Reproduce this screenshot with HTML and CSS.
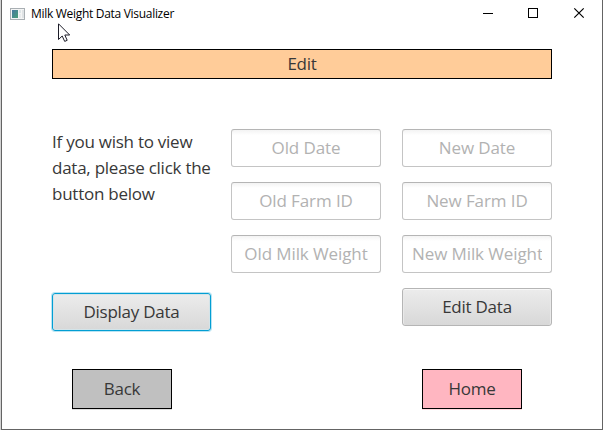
FILE: index.html
```
<!DOCTYPE html>
<html lang="en">
<head>
<meta charset="utf-8">
<title>Milk Weight Data Visualizer</title>
<link rel="stylesheet" href="styles.css">
</head>
<body>
<div class="window">
  <header class="titlebar">
    <svg class="app-icon" width="15" height="12" viewBox="0 0 15 12">
      <defs><linearGradient id="g" x1="0" y1="0" x2="1" y2="1"><stop offset="0" stop-color="#4878a0"/><stop offset="1" stop-color="#48a078"/></linearGradient></defs>
      <rect x=".5" y=".5" width="14" height="11" fill="#f4f5f5" stroke="#a9afb3"/>
      <rect x="2" y="2" width="6" height="8" fill="url(#g)"/>
      <rect x="9" y="2" width="2" height="3" fill="#dce4e6"/>
      <rect x="12" y="2" width="2" height="8" fill="#dfe3e5"/>
      <rect x="9" y="6" width="2" height="4" fill="#e8ebed"/>
    </svg>
    <span class="title">Milk Weight Data Visualizer</span>
    <svg class="controls" width="103" height="12" viewBox="0 0 103 12" fill="none" stroke="#000">
      <path d="M0 6.5H10M45.5 1.5H54.5V10.5H45.5Z" shape-rendering="crispEdges"/>
      <path d="M91.3 1.3L100.7 10.7M100.7 1.3L91.3 10.7" stroke-width="1.2"/>
    </svg>
  </header>
  <main class="content">
    <h1 class="heading">Edit</h1>
    <div class="columns">
      <section class="view">
        <p class="hint">If you wish to view<br>data, please click the<br>button below</p>
        <button class="button focused">Display Data</button>
      </section>
      <section class="fields">
        <input class="field" placeholder="Old Date" aria-label="Old Date">
        <input class="field" placeholder="Old Farm ID" aria-label="Old Farm ID">
        <input class="field" placeholder="Old Milk Weight" aria-label="Old Milk Weight">
      </section>
      <section class="fields">
        <input class="field" placeholder="New Date" aria-label="New Date">
        <input class="field" placeholder="New Farm ID" aria-label="New Farm ID">
        <input class="field overflowing" placeholder="New Milk Weight" aria-label="New Milk Weight">
        <button class="button">Edit Data</button>
      </section>
    </div>
    <nav class="nav">
      <button class="nav-button back">Back</button>
      <button class="nav-button home">Home</button>
    </nav>
  </main>
  <svg class="cursor" width="13" height="20" viewBox="0 0 13 20">
    <path d="M.5 .8V16.5L4.2 13L6.7 18.4L9.2 17.3L6.8 12H11.7Z" fill="#fff" stroke="#1c1c28"/>
  </svg>
</div>
</body>
</html>
```
FILE: styles.css
```
* { box-sizing: border-box; }
body {
  margin: 0;
  width: 603px;
  height: 430px;
  overflow: hidden;
  background: #d2d2d2;
  font: 17px/26px "Open Sans", "Noto Sans", sans-serif;
  color: #383838;
}
.window {
  position: relative;
  height: 430px;
  margin-left: 1px;
  background: #fff;
  border: solid #646464;
  border-width: 0 1px 1px;
}
.titlebar {
  display: flex;
  align-items: center;
  height: 27px;
  padding: 0 16px 0 8px;
}
.title {
  margin-left: 6px;
  font-size: 12px;
  line-height: 16px;
  letter-spacing: -0.3px;
  color: #000;
  white-space: nowrap;
}
.controls { margin-left: auto; position: relative; top: -0.5px; }
.content { width: 500px; margin: 22px 0 0 50px; }
.heading {
  display: flex;
  justify-content: center;
  margin: 0;
  height: 30px;
  border: 1px solid #000;
  background: #ffcc99;
  font: inherit;
  line-height: 28px;
}
.columns {
  display: grid;
  grid-template-columns: 159px 150px 150px;
  justify-content: space-between;
  margin-top: 50px;
  height: 202px;
}
.columns > :nth-child(2) { margin: 0 0.5px 0 -0.5px; }
.view {
  display: flex;
  flex-direction: column;
  justify-content: space-between;
}
.hint { margin: 0; white-space: nowrap; }
.fields { display: flex; flex-direction: column; gap: 15px; }
.field, .button {
  display: block;
  width: 100%;
  height: 38px;
  margin: 0;
  border: 1px solid #c4c4c4;
  border-top-color: #b5b5b5;
  border-radius: 3px;
  font: inherit;
  color: #383838;
}
.field {
  padding: 0 9px 1px;
  text-align: center;
  background: linear-gradient(#f3f3f3, #fff 5px);
}
.field::placeholder { color: #b2b2b2; opacity: 1; }
.overflowing { text-align: left; }
.button {
  padding: 0;
  background: linear-gradient(#ececec, #d8d8d8);
  border-color: #b5b5b5;
  box-shadow: inset 0 1px #f8f8f8, inset 1px 0 #e9e9e9, inset -1px 0 #e9e9e9;
}
.focused {
  border-color: #039ed3;
  box-shadow: 0 0 0 1px #b9e4f3, inset 0 0 0 1px #d4e4e9;
}
.nav {
  display: flex;
  justify-content: space-between;
  margin-top: 38px;
  padding: 0 30px 0 20px;
}
.nav-button {
  width: 100px;
  height: 40px;
  padding: 0;
  border: 1px solid #000;
  font: inherit;
  color: #383838;
}
.back { background: #c0c0c0; box-shadow: 0 1px #dedede; }
.home { background: #ffb6c1; box-shadow: 0 1px #ffdce1; }
.heading, .hint, .button, .nav-button { letter-spacing: -0.25px; }
.field { letter-spacing: -0.1px; }
.cursor { position: absolute; left: 56px; top: 23px; }
```
